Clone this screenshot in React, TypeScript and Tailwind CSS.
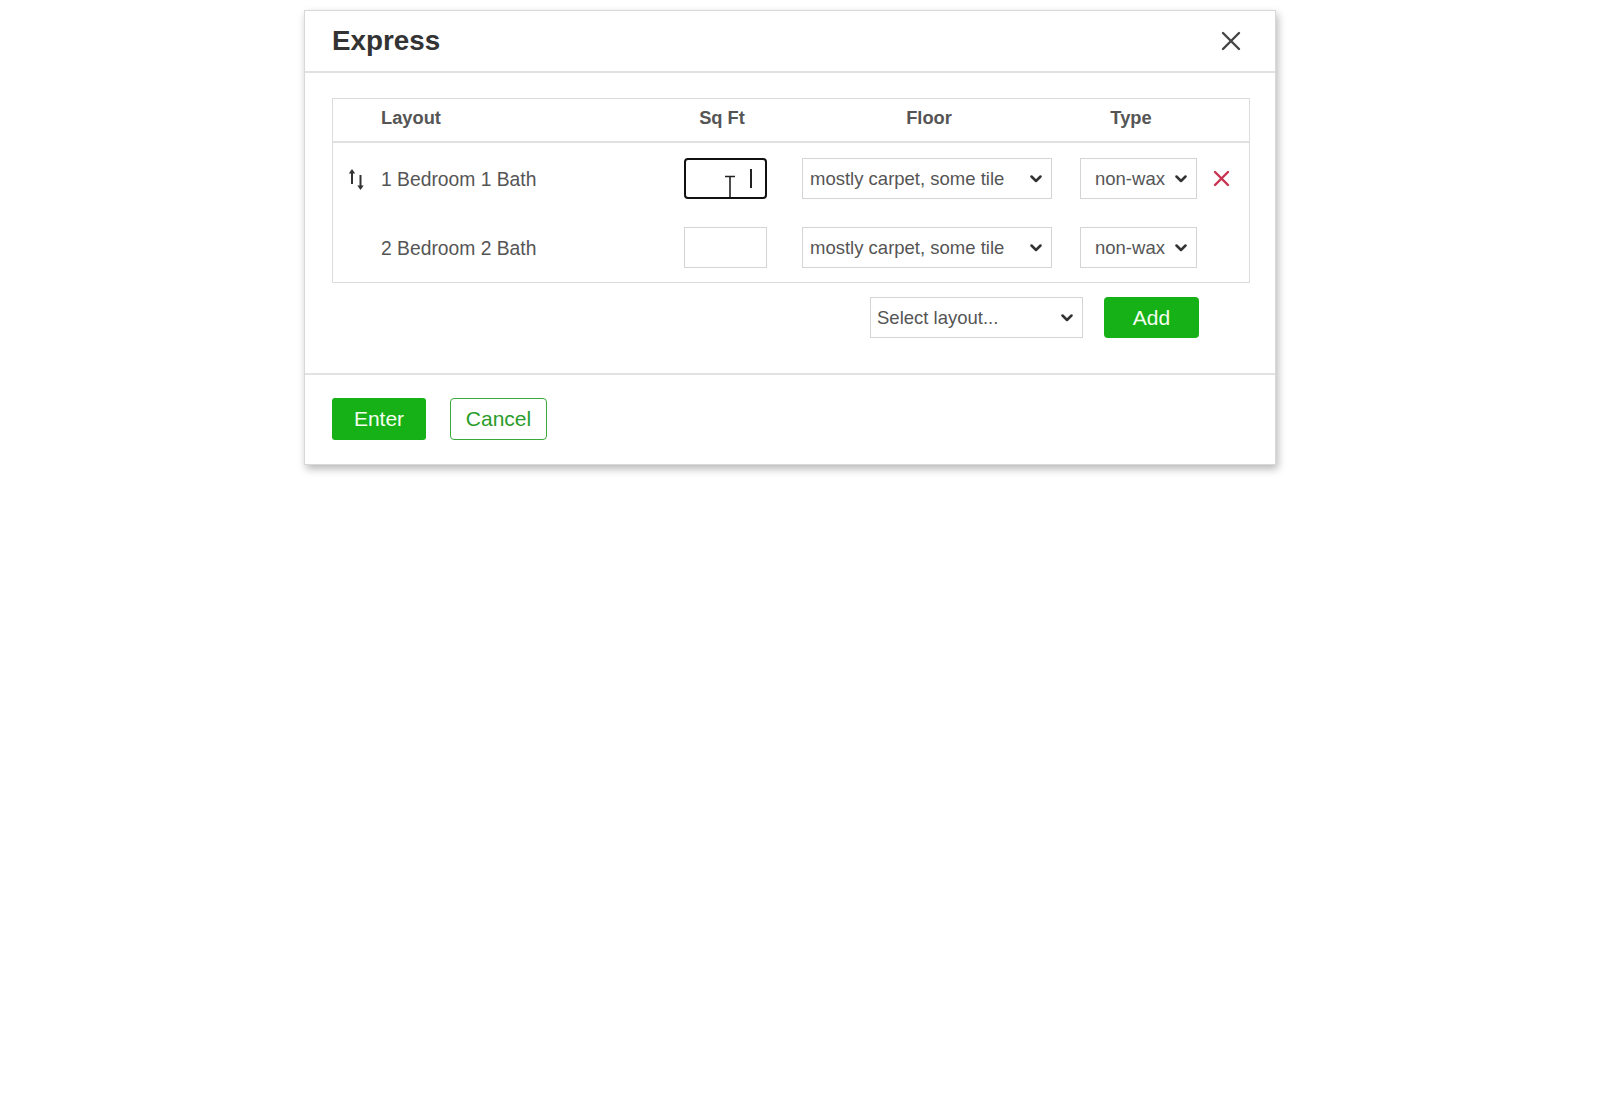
import React from "react";

const font = { fontFamily: '"Liberation Sans", Arial, sans-serif' };

function Chevron() {
  return (
    <svg width="12" height="8" viewBox="0 0 12 8" className="shrink-0">
      <path d="M1.5 1.5 L6 6 L10.5 1.5" fill="none" stroke="#333" strokeWidth="2.5" strokeLinecap="round" strokeLinejoin="round" />
    </svg>
  );
}

function FakeSelect({ text, className, textClass }: { text: string; className: string; textClass: string }) {
  return (
    <div className={`flex items-center justify-between h-[41px] border border-[#d4d4d4] bg-white text-[18.5px] text-[#555] ${className}`}>
      <span className={textClass}>{text}</span>
      <span className="pr-[9px]">
        <Chevron />
      </span>
    </div>
  );
}

function SortIcon() {
  return (
    <svg width="18" height="25" viewBox="0 0 18 25">
      <path d="M4 17 V5" stroke="#333" strokeWidth="2" fill="none" />
      <path d="M0.8 6.5 L4 2 L7.2 6.5 Z" fill="#333" />
      <path d="M12.5 8 V20" stroke="#333" strokeWidth="2" fill="none" />
      <path d="M9.3 18.5 L12.5 23 L15.7 18.5 Z" fill="#333" />
    </svg>
  );
}

function Row({ label, first }: { label: string; first?: boolean }) {
  return (
    <div className="flex items-center h-[69px]">
      <div className="w-[48px] pl-[15px] pt-[2px] flex items-center">{first ? <SortIcon /> : null}</div>
      <div className="w-[303px] pt-[4px] text-[19.3px] text-[#555]">{label}</div>
      {first ? (
        <div className="relative w-[83px] h-[41px] rounded-[4px] border-[2.5px] border-[#111] bg-white">
          <div className="absolute left-[64px] top-[9px] w-[1.5px] h-[19px] bg-[#222]" />
          <svg className="absolute left-[38px] top-[15px]" width="12" height="22" viewBox="0 0 12 22">
            <path d="M1 1.5 H11 M6 1.5 V22" stroke="#222" strokeWidth="1.6" fill="none" />
          </svg>
        </div>
      ) : (
        <div className="w-[83px] h-[41px] border border-[#d4d4d4] bg-white" />
      )}
      <FakeSelect text="mostly carpet, some tile" className="ml-[35px] w-[250px]" textClass="pl-[7px]" />
      <FakeSelect text="non-wax" className="ml-[28px] w-[117px]" textClass="pl-[14px]" />
      {first ? (
        <svg className="ml-[16px]" width="17" height="17" viewBox="0 0 17 17">
          <path d="M2 2 L15 15 M15 2 L2 15" stroke="#c8324f" strokeWidth="2.4" strokeLinecap="round" />
        </svg>
      ) : null}
    </div>
  );
}

export default function App() {
  return (
    <div className="min-h-[1112px] bg-white pt-[10px] pl-[304px]" style={font}>
      <div className="w-[972px] bg-white border border-[#d8d8d8] shadow-[2px_4px_8px_rgba(0,0,0,0.28)]">
        {/* Header */}
        <div className="flex items-center justify-between h-[62px] border-b-2 border-[#e2e2e2] pl-[27px] pr-[34px]">
          <h1 className="text-[27.8px] font-bold text-[#333]">Express</h1>
          <svg width="20" height="20" viewBox="0 0 20 20">
            <path d="M2 2 L18 18 M18 2 L2 18" stroke="#444" strokeWidth="2.4" strokeLinecap="round" />
          </svg>
        </div>
        {/* Body */}
        <div className="pt-[25px] pl-[27px] pr-[25px] pb-[35px] border-b-2 border-[#e2e2e2]">
          <div className="border border-[#dcdcdc]">
            <div className="flex items-center h-[44px] pb-[5px] border-b-2 border-[#e0e0e0] text-[18.3px] font-bold text-[#555]">
              <div className="w-[48px]" />
              <div className="w-[303px]">Layout</div>
              <div className="w-[76px] text-center">Sq Ft</div>
              <div className="ml-[42px] w-[254px] text-center">Floor</div>
              <div className="ml-[24px] w-[102px] text-center">Type</div>
            </div>
            <div className="pt-[1px]">
              <Row label="1 Bedroom 1 Bath" first />
              <Row label="2 Bedroom 2 Bath" />
            </div>
          </div>
          <div className="flex justify-end items-center mt-[14px] pr-[51px] gap-[21px]">
            <FakeSelect text="Select layout..." className="w-[213px]" textClass="pl-[6px]" />
            <button className="w-[95px] h-[41px] rounded-[4px] bg-[#16b116] text-[21px] text-[#f4fff0]">Add</button>
          </div>
        </div>
        {/* Footer */}
        <div className="flex items-center gap-[24px] pl-[27px] pt-[23px] pb-[24px]">
          <button className="w-[94px] h-[42px] rounded-[3px] bg-[#16b116] text-[21px] text-[#f4fff0]">Enter</button>
          <button className="w-[97px] h-[42px] rounded-[4px] border border-[#3aa83a] bg-white text-[21px] text-[#2a9c2a]">Cancel</button>
        </div>
      </div>
    </div>
  );
}
